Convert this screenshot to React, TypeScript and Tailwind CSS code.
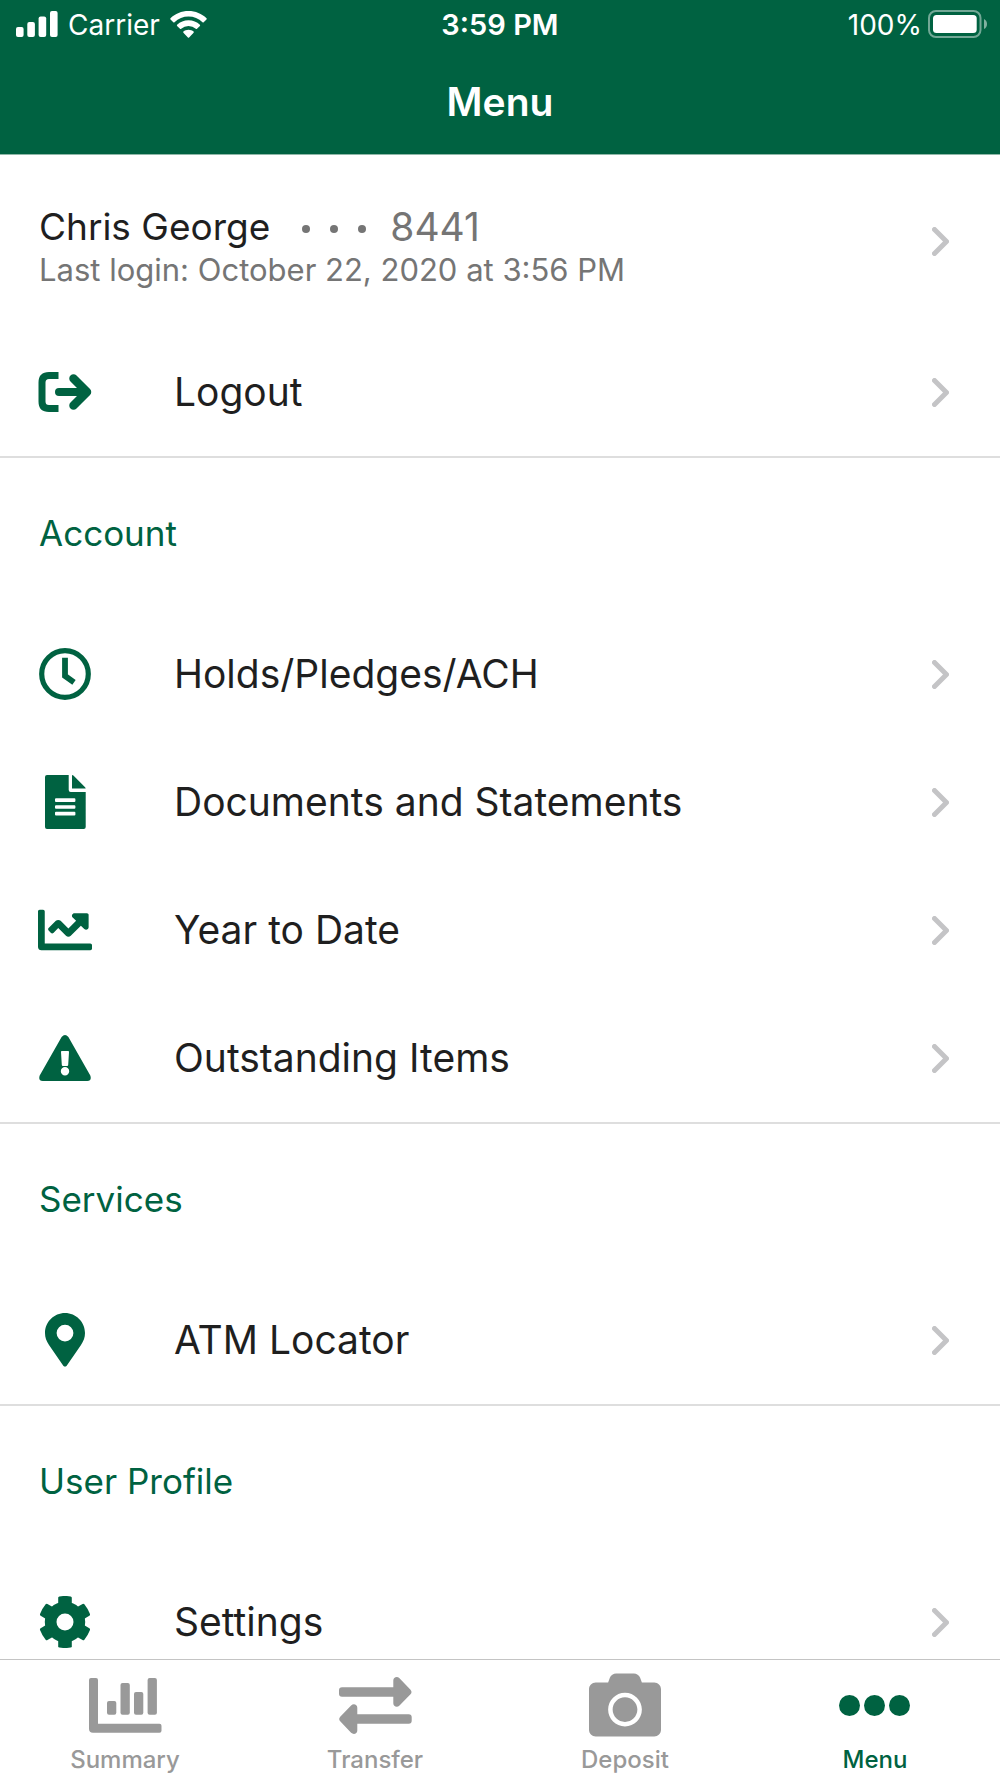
import type { ReactNode } from "react";
import { FaCamera, FaChartLine } from "react-icons/fa";

type Item = { label: string; icon: ReactNode };

const sections: { title: string; items: Item[] }[] = [
  {
    title: "Account",
    items: [
      { label: "Holds/Pledges/ACH", icon: <ClockIcon /> },
      { label: "Documents and Statements", icon: <DocumentIcon /> },
      { label: "Year to Date", icon: <FaChartLine size={54} /> },
      { label: "Outstanding Items", icon: <WarningIcon /> },
    ],
  },
  {
    title: "Services",
    items: [{ label: "ATM Locator", icon: <PinIcon /> }],
  },
  {
    title: "User Profile",
    items: [{ label: "Settings", icon: <GearIcon /> }],
  },
];

const tabs: Item[] = [
  { label: "Summary", icon: <BarsIcon /> },
  { label: "Transfer", icon: <TransferIcon /> },
  { label: "Deposit", icon: <FaCamera size={72} /> },
  { label: "Menu", icon: <DotsIcon /> },
];

export default function App() {
  return (
    <div className="flex h-screen flex-col bg-white font-['Inter',sans-serif] text-[#1f1f1f]">
      <Header />
      <main className="min-h-0 flex-1 overflow-y-auto [scrollbar-width:none]">
        <section className="border-b-2 border-[#dedede]">
          <Profile />
          <MenuRow label="Logout" icon={<LogoutIcon />} />
        </section>
        {sections.map(({ title, items }) => (
          <section
            key={title}
            className="border-b-2 border-[#dedede] last:border-b-0"
          >
            <h2 className="flex h-[152px] items-center px-[39px] pb-0.5 text-[35px] text-[#006241]">
              {title}
            </h2>
            {items.map((item) => (
              <MenuRow key={item.label} {...item} />
            ))}
          </section>
        ))}
      </main>
      <TabBar active="Menu" />
    </div>
  );
}

function Header() {
  return (
    <header className="border-b border-[#8fb8a8] bg-[#006241] text-white">
      <div className="grid h-[50px] grid-cols-3 items-center px-4 text-[28px]">
        <div className="flex items-center gap-[10px]">
          <SignalIcon />
          <span>Carrier</span>
          <WifiIcon />
        </div>
        <span className="text-center text-[29px] font-semibold">3:59 PM</span>
        <div className="-mr-1 flex items-center justify-end gap-[6px]">
          <span>100%</span>
          <BatteryIcon />
        </div>
      </div>
      <h1 className="flex h-[104px] items-center justify-center text-[39px] font-semibold">
        Menu
      </h1>
    </header>
  );
}

function Profile() {
  return (
    <a href="#profile" className="flex h-[173px] items-center pr-[51px] pl-[39px]">
      <div className="flex-1 pt-2">
        <div className="flex items-center text-[37px] leading-[48px]">
          <span>Chris George</span>
          <span className="mr-6 ml-8 flex gap-5 pt-1">
            <i className="size-2 rounded-full bg-[#757575]" />
            <i className="size-2 rounded-full bg-[#757575]" />
            <i className="size-2 rounded-full bg-[#757575]" />
          </span>
          <span className="text-[39px] text-[#757575]">8441</span>
        </div>
        <p className="text-[31px] leading-[38px] text-[#757575]">
          Last login: October 22, 2020 at 3:56 PM
        </p>
      </div>
      <Chevron />
    </a>
  );
}

function MenuRow({ label, icon }: Item) {
  return (
    <a href="#item" className="flex h-32 items-center pr-[51px] pl-[38px]">
      <span className="flex w-[54px] shrink-0 justify-center text-[#006241]">
        {icon}
      </span>
      <span className="flex-1 pl-[82px] text-[39px]">{label}</span>
      <Chevron />
    </a>
  );
}

function TabBar({ active }: { active: string }) {
  return (
    <nav className="grid grid-cols-4 border-t border-[#c4c4c4] bg-white pt-[13px] pb-1">
      {tabs.map(({ label, icon }) => (
        <button
          key={label}
          className={`flex flex-col items-center gap-[9px] text-[24px] leading-7 font-medium ${active === label ? "text-[#006241]" : "text-[#999999]"}`}
        >
          <span className="flex h-16 items-center">{icon}</span>
          {label}
        </button>
      ))}
    </nav>
  );
}

function Chevron() {
  return (
    <svg width="17" height="29" viewBox="0 0 17 29" fill="none">
      <path
        d="M2.5 2.5L14.5 14.5L2.5 26.5"
        stroke="#c4c4c6"
        strokeWidth="5"
        strokeLinecap="round"
        strokeLinejoin="round"
      />
    </svg>
  );
}

function SignalIcon() {
  return (
    <svg width="42" height="26" viewBox="0 0 42 26" fill="currentColor" className="-mt-0.5">
      <rect x="0" y="16" width="7.6" height="10" rx="2" />
      <rect x="11.3" y="11" width="7.6" height="15" rx="2" />
      <rect x="22.6" y="5.6" width="7.6" height="20.4" rx="2" />
      <rect x="34" y="0" width="7.6" height="26" rx="2" />
    </svg>
  );
}

function WifiIcon() {
  return (
    <svg width="37" height="27" viewBox="0 0 37 27" fill="currentColor" className="-mt-0.5">
      <path d="M18.5 0C25.5 0 31.8 2.7 36.5 7.2Q37 7.8 36.5 8.4L33.7 11.2Q33.1 11.7 32.5 11.2A20.3 20.3 0 0 0 4.5 11.2Q3.9 11.7 3.3 11.2L.5 8.4Q0 7.8 .5 7.2C5.2 2.7 11.5 0 18.5 0Z" />
      <path d="M18.5 9.3C22.9 9.3 26.9 11 29.9 13.8Q30.4 14.4 29.9 15L27 17.8Q26.4 18.3 25.8 17.8A11 11 0 0 0 11.2 17.8Q10.6 18.3 10 17.8L7.1 15Q6.6 14.4 7.1 13.8C10.1 11 14.1 9.3 18.5 9.3Z" />
      <path d="M18.5 18.7C20.5 18.7 22.3 19.4 23.6 20.6Q24.1 21.2 23.6 21.7L19.1 26.4Q18.5 27 17.9 26.4L13.4 21.7Q12.9 21.2 13.4 20.6C14.7 19.4 16.5 18.7 18.5 18.7Z" />
    </svg>
  );
}

function BatteryIcon() {
  return (
    <svg width="60" height="28" viewBox="0 0 60 28" className="-mt-0.5">
      <rect
        x="1"
        y="1"
        width="51.5"
        height="26"
        rx="7"
        fill="none"
        stroke="white"
        strokeOpacity=".45"
        strokeWidth="2"
      />
      <rect x="5" y="5" width="43.7" height="18" rx="3.5" fill="white" />
      <path d="M56 9Q59 10.5 59 14T56 19Z" fill="white" fillOpacity=".5" />
    </svg>
  );
}

function LogoutIcon() {
  return (
    <svg width="54" height="40" viewBox="0 0 54 40" fill="none" stroke="currentColor">
      <path d="M20.5 3.5H11Q4 3.5 4 10.5V29.5Q4 36.5 11 36.5H20.5" strokeWidth="7" />
      <path d="M21 20H46" strokeWidth="8" strokeLinecap="round" />
      <path
        d="M35.5 6.5L49 20L35.5 33.5"
        strokeWidth="8.5"
        strokeLinecap="round"
        strokeLinejoin="round"
      />
    </svg>
  );
}

function ClockIcon() {
  return (
    <svg width="52" height="52" viewBox="0 0 52 52" fill="none" stroke="currentColor">
      <circle cx="26" cy="26" r="23.3" strokeWidth="5.2" />
      <path d="M26 9.7V28L35 34.3" strokeWidth="5.8" />
    </svg>
  );
}

function DocumentIcon() {
  return (
    <svg width="41" height="54" viewBox="0 0 41 54" fill="currentColor">
      <path
        fillRule="evenodd"
        d="M2 0H23.7V15Q23.7 17 25.7 17H40.7V52Q40.7 54 38.7 54H2Q0 54 0 52V2Q0 0 2 0ZM11 23.3Q10 23.3 10 24.3V26Q10 27 11 27H29.4Q30.4 27 30.4 26V24.3Q30.4 23.3 29.4 23.3ZM11 30.3Q10 30.3 10 31.3V32.7Q10 33.7 11 33.7H29.4Q30.4 33.7 30.4 32.7V31.3Q30.4 30.3 29.4 30.3ZM11 36.7Q10 36.7 10 37.7V39.4Q10 40.4 11 40.4H29.4Q30.4 40.4 30.4 39.4V37.7Q30.4 36.7 29.4 36.7Z"
      />
      <path d="M27 0Q27.8 0 28.4 .6L40.1 12.2Q40.7 12.8 40.7 13.6H27Z" />
    </svg>
  );
}

function WarningIcon() {
  return (
    <svg width="52" height="46" viewBox="0 0 52 46" fill="currentColor">
      <path
        fillRule="evenodd"
        d="M22.6 2Q26 -2 29.4 2L51.3 40.5Q53 45.6 48.3 46H3.7Q-1 45.6 .7 40.5ZM22.9 16Q21.9 16 22 17L22.8 30Q22.9 31 23.9 31H28.1Q29.1 31 29.2 30L30 17Q30.1 16 29.1 16ZM26 32A4.2 4.2 0 1 0 26 40.4A4.2 4.2 0 1 0 26 32Z"
      />
    </svg>
  );
}

function PinIcon() {
  return (
    <svg width="40" height="54" viewBox="0 0 40 54" fill="currentColor">
      <path
        fillRule="evenodd"
        d="M20 0C31 0 40 9 40 20C40 24.5 38.6 28 36 32L21.7 52.7Q20 54.5 18.3 52.7L4 32C1.4 28 0 24.5 0 20C0 9 9 0 20 0ZM20 11.7A8.4 8.4 0 1 0 20 28.5A8.4 8.4 0 1 0 20 11.7Z"
      />
    </svg>
  );
}

function GearIcon() {
  return (
    <svg width="52" height="52" viewBox="0 0 52 52" fill="currentColor">
      <path
        fillRule="evenodd"
        d="M26 5.8A20.2 20.2 0 1 0 26 46.2A20.2 20.2 0 1 0 26 5.8ZM26 17.5A8.5 8.5 0 1 1 26 34.5A8.5 8.5 0 1 1 26 17.5Z"
      />
      {[0, 60, 120, 180, 240, 300].map((angle) => (
        <path
          key={angle}
          d="M19.2 10V1.8Q19.2 .6 20.4 .4Q26 -.5 31.6 .4Q32.8 .6 32.8 1.8V10Z"
          transform={`rotate(${angle} 26 26)`}
        />
      ))}
    </svg>
  );
}

function BarsIcon() {
  return (
    <svg width="73" height="55" viewBox="0 0 73 55" fill="currentColor">
      <path d="M2 0H7Q9 0 9 2V45.7H70.5Q72.5 45.7 72.5 47.7V52.7Q72.5 54.7 70.5 54.7H4Q0 54.7 0 50.7V2Q0 0 2 0Z" />
      <rect x="18" y="23" width="9.3" height="13.7" rx="2" />
      <rect x="31.5" y="5" width="9.3" height="31.7" rx="2" />
      <rect x="45" y="14" width="9.3" height="22.7" rx="2" />
      <rect x="58.6" y="0" width="9.3" height="36.7" rx="2" />
    </svg>
  );
}

function TransferIcon() {
  return (
    <svg width="73" height="57" viewBox="0 0 73 57" fill="currentColor">
      <path d="M3 10.3H54.3V3.5C54.3 .3 58 -1 60.5 1.2L71.5 12.7Q73.5 15 71.5 17.3L60.5 28.6C58 31 54.3 29.5 54.3 26.3V19.7H3Q0 19.7 0 16.7V13.3Q0 10.3 3 10.3Z" />
      <path d="M69.7 37.3H18.3V30.7C18.3 27.5 14.6 26.2 12.1 28.4L1.2 39.7Q-.8 42 1.2 44.3L12.1 55.8C14.6 58 18.3 56.7 18.3 53.5V46.7H69.7Q72.7 46.7 72.7 43.7V40.3Q72.7 37.3 69.7 37.3Z" />
    </svg>
  );
}

function DotsIcon() {
  return (
    <svg width="72" height="21" viewBox="0 0 72 21" fill="currentColor">
      <circle cx="10.5" cy="10.5" r="10.5" />
      <circle cx="35.5" cy="10.5" r="10.5" />
      <circle cx="60.5" cy="10.5" r="10.5" />
    </svg>
  );
}
